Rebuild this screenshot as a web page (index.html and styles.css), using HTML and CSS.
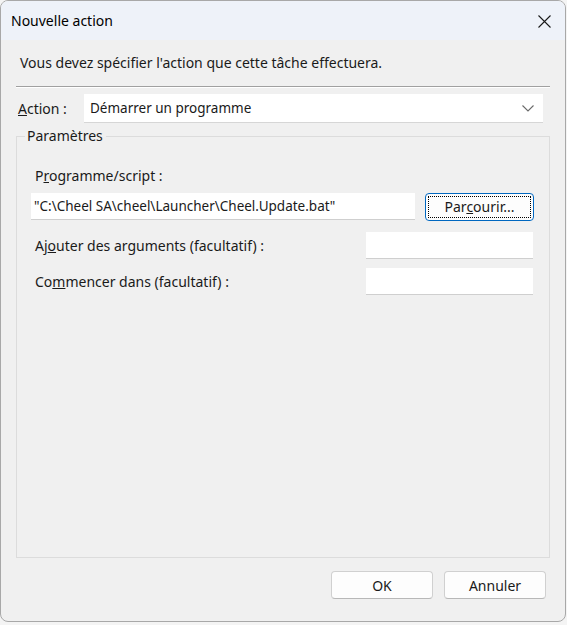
FILE: index.html
```html
<!DOCTYPE html>
<html lang="fr">
<head>
    <meta charset="UTF-8">
    <title>Nouvelle action</title>
    <link rel="stylesheet" href="styles.css">
</head>
<body>
    <div class="window">
        <div class="titlebar">
            <span class="title">Nouvelle action</span>
            <svg class="close" width="13" height="13" viewBox="0 0 13 13">
                <path d="M0.5 0.5 L12.5 12.5 M12.5 0.5 L0.5 12.5" stroke="#1a1a1a" stroke-width="1.1" fill="none"/>
            </svg>
        </div>
        <div class="content">
            <p class="intro">Vous devez spécifier l'action que cette tâche effectuera.</p>
            <div class="separator"></div>

            <div class="action-row">
                <label class="action-label"><u>A</u>ction :</label>
                <div class="combo">
                    <span>Démarrer un programme</span>
                    <svg width="12" height="7" viewBox="0 0 12 7">
                        <path d="M0.5 0.5 L6 6 L11.5 0.5" stroke="#6b6b6b" stroke-width="1.1" fill="none"/>
                    </svg>
                </div>
            </div>

            <fieldset class="group">
                <legend>Paramètres</legend>
                <div class="field-label">P<u>r</u>ogramme/script :</div>
                <div class="program-row">
                    <div class="input wide">"C:\Cheel SA\cheel\Launcher\Cheel.Update.bat"</div>
                    <button class="browse"><span class="focus">Par<u>c</u>ourir...</span></button>
                </div>
                <div class="opt-row first">
                    <span class="field-label">Aj<u>o</u>uter des arguments (facultatif) :</span>
                    <div class="input small"></div>
                </div>
                <div class="opt-row">
                    <span class="field-label">Co<u>m</u>mencer dans (facultatif) :</span>
                    <div class="input small"></div>
                </div>
            </fieldset>

            <div class="buttons">
                <button class="btn">OK</button>
                <button class="btn">Annuler</button>
            </div>
        </div>
    </div>
</body>
</html>
```

FILE: styles.css
```css
body {
    margin: 0;
    padding: 0;
    background-color: #f4f4f4;
    font-family: "Noto Sans", sans-serif;
    font-size: 14px;
    color: #1a1a1a;
}
.window {
    width: 564px;
    height: 620px;
    border: 1px solid #a8a8a8;
    border-radius: 8px;
    overflow: hidden;
    display: flex;
    flex-direction: column;
    background-color: #f0f0f0;
}
.titlebar {
    height: 39px;
    background-color: #eef2f9;
    display: flex;
    align-items: center;
    justify-content: space-between;
    padding: 0 14px 0 10px;
}
.title {
    font-size: 14px;
    color: #000;
}
.close {
    margin-top: 1px;
}
.content {
    flex: 1;
    display: flex;
    flex-direction: column;
    padding: 0 15px 22px 15px;
}
.intro {
    margin: 13px 0 0 4px;
    line-height: 20px;
}
.separator {
    margin-top: 13px;
    border-top: 1px solid #a0a0a0;
    border-bottom: 1px solid #fff;
}
.action-row {
    display: flex;
    align-items: center;
    margin-top: 6px;
    margin-right: 7px;
}
.action-label {
    width: 66px;
    padding-left: 2px;
}
.combo {
    flex: 1;
    height: 29px;
    background-color: #fff;
    border-bottom: 1px solid #d6d6d6;
    box-sizing: border-box;
    display: flex;
    align-items: center;
    justify-content: space-between;
    padding: 0 9px 0 6px;
    font-size: 13.5px;
}
.group {
    flex: 1;
    margin: 4px 0 0 0;
    padding: 0 15px 0 14px;
    border: 1px solid #dcdcdc;
    min-width: 0;
}
.group legend {
    margin-left: -6px;
    padding: 0 3px 0 2px;
    line-height: 18px;
}
.field-label {
    line-height: 20px;
}
.group > .field-label {
    margin: 21px 0 0 4px;
}
.program-row {
    display: flex;
    align-items: center;
    margin-top: 5px;
}
.input {
    height: 27px;
    background-color: #fff;
    border-bottom: 1px solid #cfcfcf;
    box-sizing: border-box;
    padding: 0 3px;
    line-height: 26px;
    white-space: nowrap;
    font-size: 13.5px;
}
.input.wide {
    width: 384px;
}
.input.small {
    width: 167px;
}
.browse {
    margin-left: 10px;
    margin-top: 2px;
    width: 109px;
    height: 28px;
    padding: 2px;
    background-color: #fdfdfd;
    border: 1px solid #0067c0;
    border-radius: 4px;
    font-family: inherit;
    font-size: 14px;
    color: #1a1a1a;
}
.browse .focus {
    display: block;
    height: 100%;
    box-sizing: border-box;
    border: 1px dotted #000;
    line-height: 20px;
}
.opt-row {
    display: flex;
    align-items: center;
    justify-content: space-between;
    margin-top: 9px;
    padding-left: 4px;
    padding-right: 1px;
}
.opt-row.first {
    margin-top: 11px;
}
.buttons {
    display: flex;
    justify-content: flex-end;
    gap: 11px;
    margin-top: 13px;
    padding-right: 4px;
}
.btn {
    width: 102px;
    height: 28px;
    background-color: #fdfdfd;
    border: 1px solid #d0d0d0;
    border-bottom-color: #b8b8b8;
    border-radius: 4px;
    font-family: inherit;
    font-size: 14px;
    color: #1a1a1a;
}
```
